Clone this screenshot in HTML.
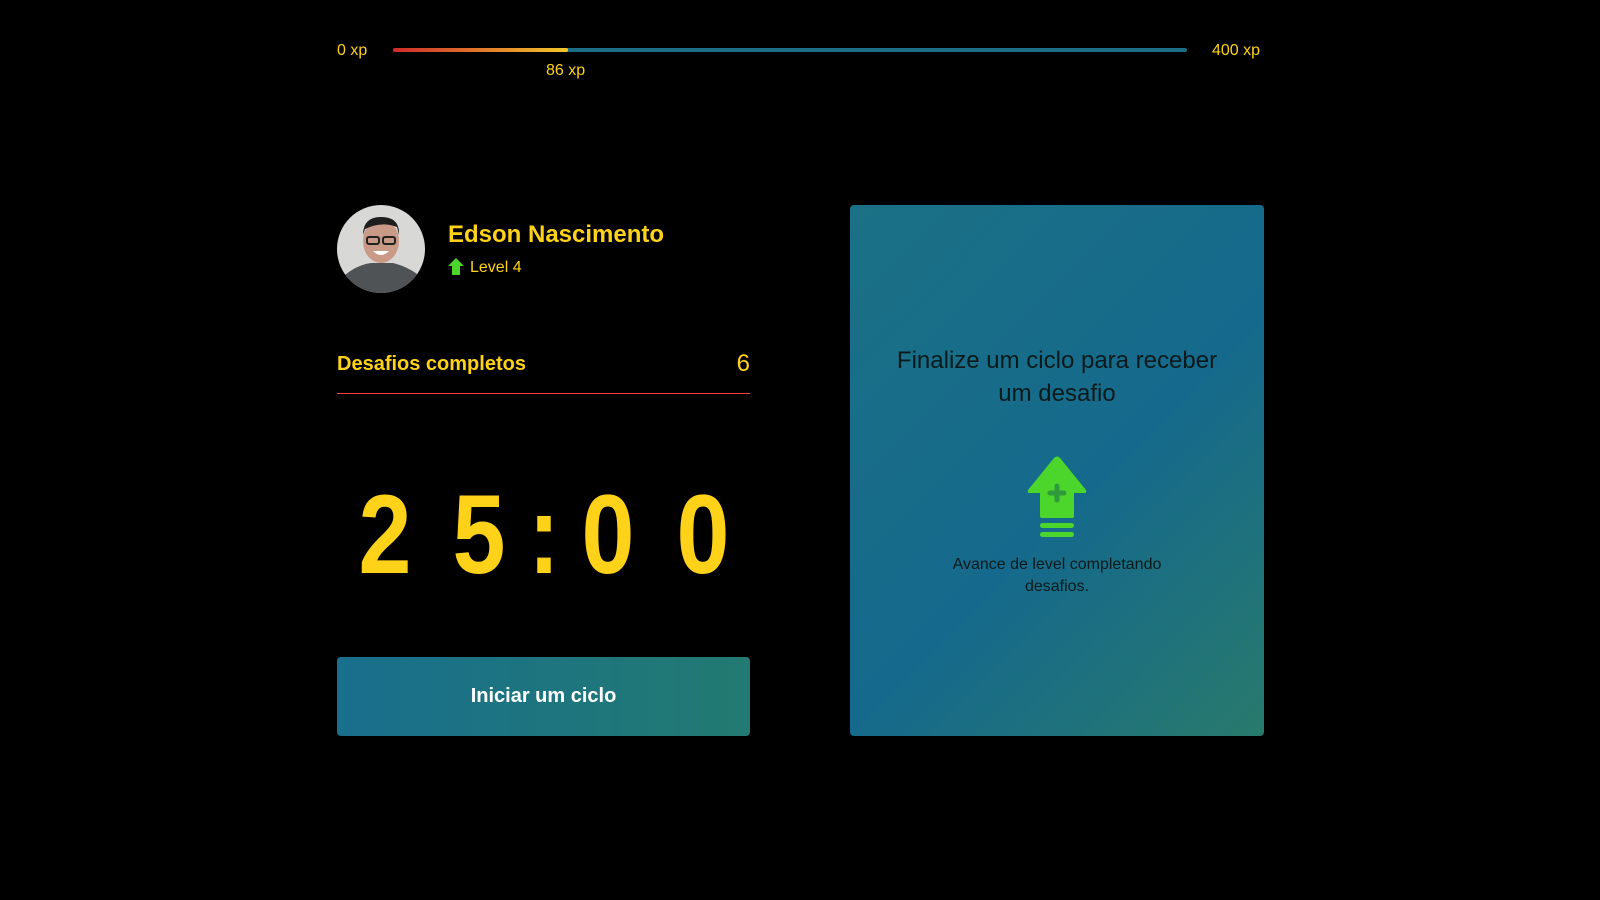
<!DOCTYPE html>
<html><head><meta charset="utf-8"><style>
*{margin:0;padding:0;box-sizing:border-box}
body{width:1600px;height:900px;background:#000;font-family:"Liberation Sans",sans-serif;color:#ffd21a;position:relative;overflow:hidden}
.abs{position:absolute}
.lbl{font-size:16px;color:#ffd21a}
.d{position:absolute;top:479px;font-size:112px;font-weight:bold;line-height:112px;width:60px;text-align:center;transform:scaleX(.85)}
</style></head><body>
<div class="abs lbl" style="left:337px;top:42px">0 xp</div>
<div class="abs lbl" style="left:1212px;top:42px">400 xp</div>
<div class="abs" style="left:393px;top:48px;width:794px;height:4px;border-radius:2px;background:#1b6e84"></div>
<div class="abs" style="left:393px;top:48px;width:175px;height:4px;border-radius:2px;background:linear-gradient(90deg,#cf2a2a,#f2c72a)"></div>
<div class="abs lbl" style="left:546px;top:62px">86 xp</div>

<svg class="abs" style="left:337px;top:205px" width="88" height="88" viewBox="0 0 88 88">
<defs><clipPath id="c"><circle cx="44" cy="44" r="44"/></clipPath></defs>
<g clip-path="url(#c)">
<rect width="88" height="88" fill="#d8d8d6"/>
<path d="M0 88 L8 70 Q20 60 34 58 L56 58 Q72 62 84 72 L88 88Z" fill="#505356"/>
<ellipse cx="44" cy="36" rx="18" ry="22" fill="#c99a86"/>
<path d="M26 30 Q26 12 44 12 Q63 12 62 30 L60 22 Q44 16 28 24Z" fill="#1e1e1e"/>
<rect x="30" y="32" width="12" height="7" rx="2" fill="none" stroke="#222" stroke-width="2"/>
<rect x="46" y="32" width="12" height="7" rx="2" fill="none" stroke="#222" stroke-width="2"/>
<path d="M36 46 Q44 54 52 46Z" fill="#fff"/>
</g></svg>
<div class="abs" style="left:448px;top:221px;font-size:24px;font-weight:bold">Edson Nascimento</div>
<svg class="abs" style="left:448px;top:258px" width="16" height="17" viewBox="0 0 16 17"><path d="M8 0 L16 8 L12 8 L12 17 L4 17 L4 8 L0 8Z" fill="#4cd62b"/></svg>
<div class="abs" style="left:470px;top:259px;font-size:16px">Level 4</div>

<div class="abs" style="left:337px;top:353px;font-size:20px;font-weight:bold;color:#ffd21a">Desafios completos</div>
<div class="abs" style="left:700px;top:350px;width:50px;text-align:right;font-size:24px">6</div>
<div class="abs" style="left:337px;top:393px;width:413px;height:1px;background:#ff3b46"></div>

<div class="d" style="left:354px">2</div>
<div class="d" style="left:448px">5</div>
<div class="d" style="left:514px;width:60px">:</div>
<div class="d" style="left:577px">0</div>
<div class="d" style="left:672px">0</div>

<div class="abs" style="left:337px;top:657px;width:413px;height:79px;border-radius:4px;background:linear-gradient(90deg,#196f8c,#227a72);color:#fff;font-size:20px;font-weight:bold;text-align:center;line-height:79px">Iniciar um ciclo</div>

<div class="abs" style="left:850px;top:205px;width:414px;height:531px;border-radius:4px;background:linear-gradient(135deg,#1b7185 0%,#15698c 55%,#287a6c 100%)"></div>
<div class="abs" style="left:882px;top:344px;width:350px;text-align:center;font-size:24px;line-height:33px;color:#0a1a1a">Finalize um ciclo para receber um desafio</div>
<svg class="abs" style="left:1026px;top:456px" width="62" height="82" viewBox="0 0 62 82">
<path d="M28 2 Q31 -1 34 2 L60 34 Q61 37 58 37 L48 37 L48 60 Q48 62 46 62 L16 62 Q14 62 14 60 L14 37 L4 37 Q1 37 2 34Z" fill="#4cd62b"/>
<path d="M31 30 V44 M24 37 H38" stroke="#2f9a3c" stroke-width="5" stroke-linecap="round"/>
<rect x="14" y="67" width="34" height="5" rx="2.5" fill="#4cd62b"/>
<rect x="14" y="76" width="34" height="5" rx="2.5" fill="#4cd62b"/>
</svg>
<div class="abs" style="left:930px;top:554px;width:254px;text-align:center;font-size:16px;line-height:22px;color:#0a1a1a">Avance de level completando desafios.</div>
</body></html>
